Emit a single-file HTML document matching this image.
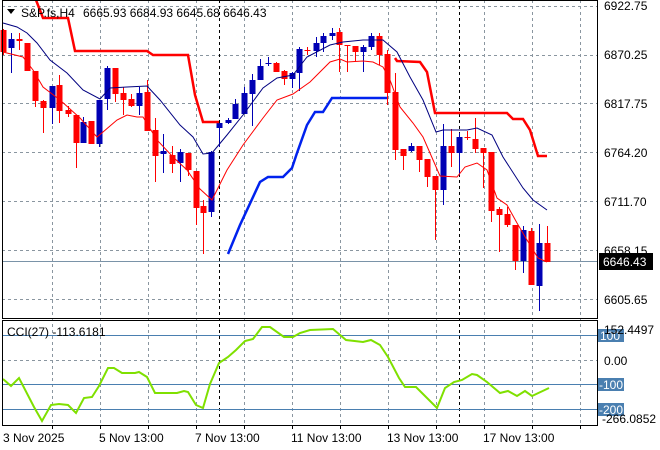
<!DOCTYPE html>
<html><head><meta charset="utf-8"><style>
body{margin:0;background:#fff;width:660px;height:450px;overflow:hidden}
svg{display:block}
text{font-family:"Liberation Sans",sans-serif;font-size:12px;fill:#000}
</style></head><body>
<svg id="s" width="660" height="450" viewBox="0 0 660 450">
<g id="grid" stroke="#8a96a0" stroke-width="1" stroke-dasharray="3,3"></g>
<line x1="219.5" y1="0" x2="219.5" y2="426" stroke="#000" stroke-dasharray="3,3"/>
<line x1="459.5" y1="0" x2="459.5" y2="426" stroke="#000" stroke-dasharray="3,3"/>
<line x1="2" y1="261.5" x2="597" y2="261.5" stroke="#7a93a8"/>
<line x1="2" y1="335.5" x2="597" y2="335.5" stroke="#4a7fb0"/>
<line x1="2" y1="384.5" x2="597" y2="384.5" stroke="#4a7fb0"/>
<line x1="2" y1="409.5" x2="597" y2="409.5" stroke="#4a7fb0"/>
<g id="c"></g>
<polyline fill="none" stroke="#ff0000" stroke-width="2.5" points="36,0 43,18 68,18 75,51 147,51 153,55 188,55 195,95 203,122 219,122"/>
<polyline fill="none" stroke="#ff0000" stroke-width="2.5" points="395,58 397,61 420,62 427,72 435,113 507,113 513,119 523,119 530,130 538,156 547,156"/>
<polyline fill="none" stroke="#0022ee" stroke-width="2.5" points="228,254 240,225 260,182 268,177 283,177 292,168 297,153 307,125 315,112 323,112 332,98 387,98"/>
<polyline fill="none" stroke="#000080" stroke-width="1" points="3,23 17,27 27,33 37,43 50,60 67,73 83,90 100,99 110,88 127,87 147,86 160,100 180,125 193,137 203,154 212,153 227,135 243,115 263,88 277,78 293,75 307,57 330,45 343,42 363,40 383,40 397,52 410,77 423,100 436,132 443,130 467,130 477,128 492,135 503,157 523,188 533,200 547,210"/>
<polyline fill="none" stroke="#ff0000" stroke-width="1" points="3,52 23,57 33,70 43,87 60,100 80,118 97,137 103,132 117,120 127,115 137,117 143,117 157,140 173,157 187,170 200,189 212,200 227,170 243,145 263,118 277,100 293,94 310,82 330,62 340,59 347,62 363,61 373,62 383,67 390,80 400,107 413,123 423,137 430,153 440,176 457,177 465,167 477,163 487,170 497,198 507,205 517,223 527,240 538,258 547,262"/>
<polyline fill="none" stroke="#7fe000" stroke-width="2" points="3,379 11,386 19,378 34,407 42,421 51,405 59,404 68,405 76,413 84,398 92,397 99,386 108,368 114,368 122,373 135,373 139,372 147,377 155,393 177,393 184,391 188,392 196,405 203,408 210,384 219,363 228,357 236,350 245,341 253,339 262,327 270,327 284,337 293,337 300,333 310,330 333,329 346,340 363,342 371,340 380,345 388,357 399,378 405,387 416,387 422,393 437,408 445,388 454,382 462,380 472,374 477,375 487,382 500,393 508,391 517,396 525,391 532,396 549,388"/>
<g fill="none" stroke="#000" stroke-width="1">
<rect x="2.5" y="0.5" width="595" height="318"/>
<rect x="2.5" y="320.5" width="595" height="105"/>
</g>
<polygon points="7,9 15,9 11,14" fill="#000"/>
<text x="21" y="17">S&amp;P.fs,H4</text>
<text x="83" y="17">6665.93 6684.93 6645.68 6646.43</text>
<text x="604" y="10">6922.75</text>
<text x="604" y="59">6870.25</text>
<text x="604" y="108">6817.75</text>
<text x="604" y="157">6764.20</text>
<text x="604" y="206">6711.70</text>
<text x="604" y="255">6658.15</text>
<rect x="599" y="253" width="54" height="17" fill="#000"/>
<text x="603" y="266" style="fill:#fff">6646.43</text>
<text x="604" y="304">6605.65</text>
<text x="7" y="336">CCI(27) -113.6181</text>
<rect x="598" y="329" width="26" height="13" fill="#4a7fb0"/>
<text x="600" y="340" style="fill:#fff">100</text>
<text x="604" y="334">152.4497</text>
<text x="604" y="365">0.00</text>
<rect x="598" y="378" width="26" height="13" fill="#4a7fb0"/>
<text x="599" y="389" style="fill:#fff">-100</text>
<rect x="598" y="403" width="26" height="13" fill="#4a7fb0"/>
<text x="599" y="414" style="fill:#fff">-200</text>
<text x="602" y="423">-266.0852</text>
<text x="3" y="442">3 Nov 2025</text>
<text x="99" y="442">5 Nov 13:00</text>
<text x="195" y="442">7 Nov 13:00</text>
<text x="291" y="442">11 Nov 13:00</text>
<text x="387" y="442">13 Nov 13:00</text>
<text x="483" y="442">17 Nov 13:00</text>
</svg>
<script>
var ns="http://www.w3.org/2000/svg",g=document.getElementById('grid'),c=document.getElementById('c');
function L(p,x1,y1,x2,y2,st){var e=document.createElementNS(ns,'line');e.setAttribute('x1',x1);e.setAttribute('y1',y1);e.setAttribute('x2',x2);e.setAttribute('y2',y2);if(st)e.setAttribute('stroke',st);p.appendChild(e);}
[52,100,148,196,244,292,340,388,436,484,532,580].forEach(function(x){L(g,x+.5,0,x+.5,426);L(g,x+.5,426,x+.5,430,'#000');});
[6,55,103,152,201,250,299,360].forEach(function(y){L(g,2,y+.5,597,y+.5);});
var d=[[3,'r',30,52,29,55],[11,'b',39,48,33,73],[19,'r',39,41,33,50],[27,'r',43,71,43,71],[35,'r',71,101,71,107],[43,'r',101,108,100,133],[52,'b',86,108,86,124],[59,'r',85,111,75,123],[68,'r',110,114,106,117],[76,'r',115,143,115,168],[83,'b',122,143,117,143],[91,'r',121,144,121,144],[99,'b',100,144,100,147],[107,'b',68,99,66,110],[115,'r',68,94,68,102],[123,'r',93,100,87,115],[131,'r',99,106,94,107],[139,'b',93,106,87,115],[147,'r',92,131,80,131],[155,'r',130,156,118,182],[163,'b',151,154,134,173],[172,'r',155,164,146,173],[180,'b',152,163,149,182],[188,'r',153,170,153,176],[196,'r',171,208,171,225],[203,'r',206,213,200,254],[211,'b',152,212,151,217],[219,'b',123,128,123,147],[228,'b',120,123,118,124],[235,'b',104,119,99,119],[244,'b',93,114,87,114],[252,'b',80,94,74,126],[260,'b',66,80,59,80],[268,'b',63,64,57,66],[276,'r',63,72,62,72],[284,'r',71,79,70,85],[292,'b',73,79,72,88],[299,'b',49,73,47,91],[307,'r',50,51,47,55],[316,'b',43,51,37,57],[323,'b',36,43,33,52],[332,'b',33,36,28,40],[339,'r',32,45,28,72],[347,'r',45,46,45,72],[355,'r',46,52,46,61],[363,'b',47,52,45,72],[371,'b',36,47,33,50],[379,'r',36,55,33,65],[387,'r',54,93,50,105],[395,'r',92,150,73,160],[403,'r',149,156,149,170],[411,'b',146,151,143,152],[419,'r',146,160,146,172],[427,'r',159,177,159,187],[435,'r',176,190,176,240],[443,'b',146,190,124,205],[451,'r',146,153,129,167],[459,'b',137,153,133,175],[467,'r',137,138,131,140],[475,'r',139,149,118,153],[483,'r',148,153,148,188],[491,'r',152,211,152,222],[499,'r',209,215,207,252],[507,'r',214,225,207,227],[515,'r',225,261,225,270],[523,'b',230,261,226,273],[531,'r',231,285,228,285],[539,'b',243,286,224,311],[547,'r',243,262,226,262]];
d.forEach(function(k){var col=k[1]=='r'?'#ff0000':'#0000b4';L(c,k[0]+.5,k[4],k[0]+.5,k[5],col);var r=document.createElementNS(ns,'rect');r.setAttribute('x',k[0]-2.5);r.setAttribute('y',k[2]);r.setAttribute('width',6);r.setAttribute('height',Math.max(1,k[3]-k[2]));r.setAttribute('fill',col);c.appendChild(r);});
</script>
</body></html>
